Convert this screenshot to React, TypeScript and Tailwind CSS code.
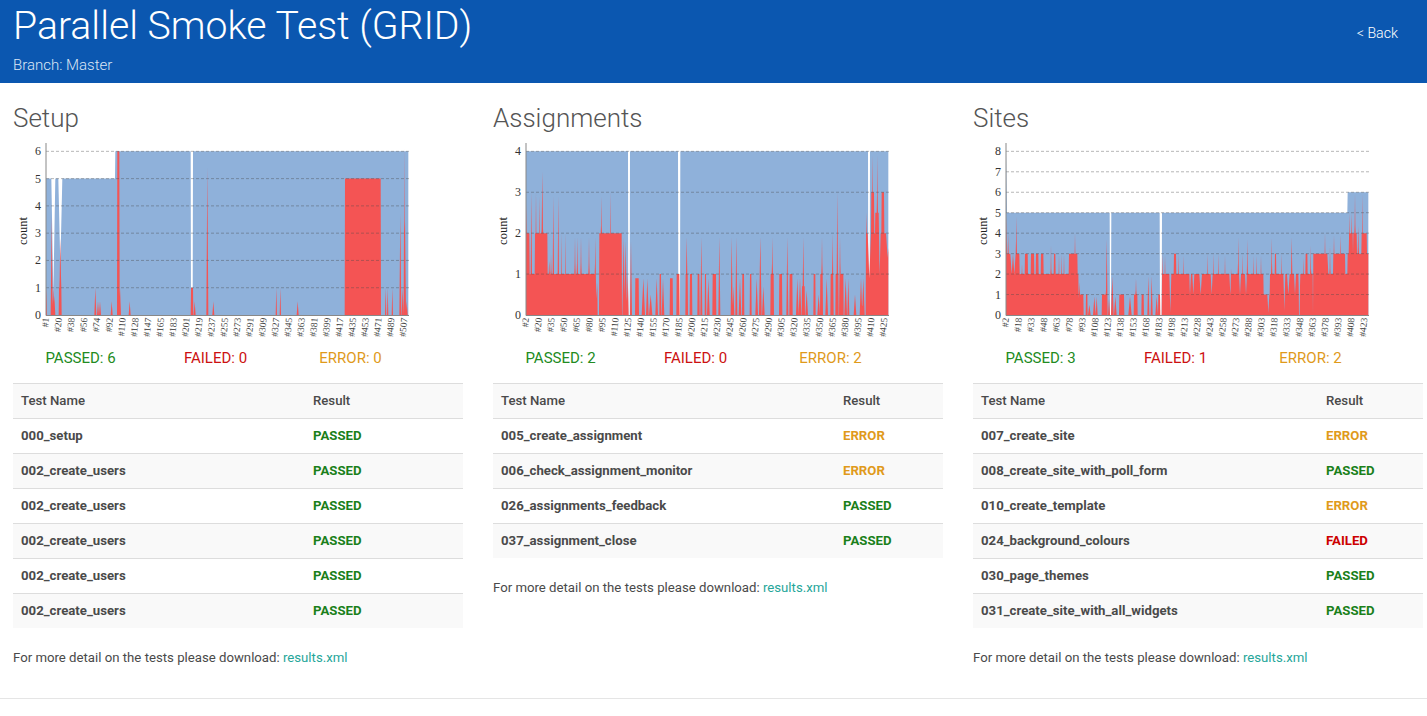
import React from "react";

type Spec = {
  max: number;
  blue: number[][];
  gaps: number[][];
  blueDips?: number[][];
  bluePeaks?: number[][];
  flats: number[][];
  peaks: number[][];
  dips: number[][];
  redGaps?: number[][];
  labels: string[];
};

const X0 = 138;
const X1 = 1225;
const Y0 = 555;
const Y1 = 64;

function profile(x: number, flats: number[][], peaks: number[][], dips: number[][], gaps: number[][]) {
  let v = 0;
  for (const [a, b, h] of flats) if (x >= a && x <= b) v = Math.max(v, h);
  for (const [c, h, w] of peaks) {
    const d = Math.abs(x - c);
    if (d < w) v = Math.max(v, h * (1 - d / w));
  }
  for (const [c, h, w] of dips) {
    const d = Math.abs(x - c);
    if (d < w) v = Math.min(v, h + (v - h) * (d / w));
  }
  for (const [a, b] of gaps) if (x >= a && x <= b) v = 0;
  return v;
}

function polygon(spec: Spec, flats: number[][], peaks: number[][], dips: number[][], gaps: number[][]) {
  const pts: string[] = [`${X0 / 3},${Y0 / 3}`];
  for (let x = X0; x <= X1; x++) {
    const v = profile(x, flats, peaks, dips, gaps);
    const y = Y0 - (v / spec.max) * (Y0 - Y1);
    pts.push(`${(x / 3).toFixed(2)},${(y / 3).toFixed(2)}`);
  }
  pts.push(`${X1 / 3},${Y0 / 3}`);
  return pts.join(" ");
}

function Chart({ spec }: { spec: Spec }) {
  const ticks = Array.from({ length: spec.max + 1 }, (_, i) => i);
  const yFor = (t: number) => (Y0 - (t / spec.max) * (Y0 - Y1)) / 3;
  return (
    <svg width="450" height="215" viewBox="13 0 450 215" className="block">
      <polygon points={polygon(spec, spec.blue, spec.bluePeaks ?? [], spec.blueDips ?? [], spec.gaps)} fill="#8fb1da" />
      <polygon points={polygon(spec, spec.flats, spec.peaks, spec.dips, spec.redGaps ?? [])} fill="#f45454" />
      {ticks.slice(1).map((t) => (
        <line key={t} x1="46" x2="409" y1={yFor(t)} y2={yFor(t)} stroke="#4a4a4a" strokeOpacity="0.4" strokeWidth="1" strokeDasharray="3 2" />
      ))}
      <line x1="46" x2="46" y1="13" y2="185.5" stroke="#888888" strokeWidth="1" />
      <line x1="46" x2="409" y1="185.5" y2="185.5" stroke="#888888" strokeWidth="1" />
      {ticks.map((t) => (
        <text key={t} x="41" y={yFor(t) + 4} textAnchor="end" fontSize="12" fill="#333" fontFamily="'Liberation Serif', serif">
          {t}
        </text>
      ))}
      <text transform="translate(27,101) rotate(-90)" textAnchor="middle" fontSize="12.5" fill="#222" fontFamily="'Liberation Serif', serif">
        count
      </text>
      {spec.labels.map((l, i) => {
        const x = (X0 + (i * (1213 - X0)) / 28) / 3 + 3;
        return (
          <text key={l} transform={`translate(${x},188) rotate(-85)`} textAnchor="end" fontSize="9.5" fill="#444" fontFamily="'Liberation Serif', serif">
            {l}
          </text>
        );
      })}
    </svg>
  );
}

const setup: Spec = {
  max: 6,
  blue: [[138, 346, 5], [346, 1225, 6]],
  gaps: [[573, 578]],
  blueDips: [[160, 0.8, 6], [181, 1.8, 6]],
  flats: [[1035, 1142, 5], [352, 358, 6], [177, 184, 1], [573, 579, 1]],
  peaks: [[139, 1, 2], [155, 3.6, 3], [160, 1, 3], [163, 0.7, 3], [181, 2.8, 4], [286, 1, 3], [294, 0.5, 3], [300, 0.5, 3], [335, 0.5, 3], [360, 1, 3], [389, 0.5, 3], [584, 0.5, 3], [622, 5.4, 3], [640, 0.5, 3], [829, 1, 2], [841, 1, 2], [893, 0.5, 3], [1157, 1, 2], [1163, 1, 2], [1177, 1, 2], [1201, 3.7, 3], [1208, 1, 3], [1213, 6.1, 2], [1215, 3.5, 3], [1220, 0.5, 3]],
  dips: [],
  labels: ["#1", "#20", "#38", "#56", "#74", "#92", "#110", "#128", "#147", "#165", "#183", "#201", "#219", "#237", "#255", "#273", "#291", "#309", "#327", "#345", "#363", "#381", "#399", "#417", "#435", "#453", "#471", "#489", "#507"],
};

const assignments: Spec = {
  max: 4,
  blue: [[138, 1225, 4]],
  gaps: [[445, 449], [595, 600], [1165, 1169]],
  flats: [[138, 352, 1], [138, 148, 2], [165, 202, 2], [358, 425, 2], [466, 476, 0.9], [539, 543, 1], [570, 578, 0.9], [590, 598, 1], [617, 623, 1], [630, 636, 1], [653, 658, 1], [675, 678, 1], [698, 708, 1], [787, 792, 1], [810, 814, 1], [872, 881, 1], [898, 906, 1], [929, 937, 1], [966, 974, 0.7], [1001, 1006, 1], [1021, 1028, 1], [1052, 1058, 1], [1067, 1075, 1], [1080, 1090, 1], [1158, 1225, 2], [1174, 1182, 3], [1186, 1197, 2.5], [1205, 1212, 3]],
  peaks: [[140, 2.7, 4], [154, 3, 3], [168, 3, 3], [178, 2.9, 3], [187, 3.5, 5], [208, 1.8, 4], [213, 1.8, 3], [220, 2.9, 3], [235, 2.9, 3], [244, 2, 2], [256, 2, 2], [285, 1.9, 3], [292, 1.9, 3], [303, 1.9, 3], [327, 1.9, 3], [346, 1.9, 3], [364, 2.9, 4], [391, 3, 3], [431, 1.9, 4], [437, 1.8, 4], [443, 1, 3], [453, 1.8, 3], [490, 0.9, 5], [502, 0.9, 4], [512, 0.5, 5], [530, 0.9, 4], [549, 0.9, 4], [620, 1.9, 4], [664, 1.9, 3], [685, 0.9, 4], [718, 1.9, 3], [755, 1.9, 3], [760, 0.7, 3], [769, 1.9, 3], [780, 0.9, 4], [830, 0.9, 4], [841, 1.9, 4], [850, 0.7, 4], [877, 1.9, 3], [922, 1.9, 3], [952, 0.9, 4], [960, 0.9, 4], [970, 1.9, 3], [980, 0.6, 4], [1016, 0.5, 4], [1026, 1.9, 3], [1040, 0.9, 4], [1058, 2, 3], [1072, 3, 3], [1080, 1.9, 3], [1097, 0.9, 4], [1105, 0.9, 3], [1125, 0.5, 4], [1143, 0.9, 4], [1150, 0.9, 4], [1160, 2.5, 3], [1178, 3.9, 4], [1192, 3.9, 4]],
  dips: [[1168, 0.9, 5], [1199, 1, 3], [1223, 1.4, 5], [210, 1, 5], [350, 0.4, 3]],
  redGaps: [[353, 357]],
  labels: ["#2", "#20", "#35", "#50", "#65", "#80", "#95", "#110", "#125", "#140", "#155", "#170", "#185", "#200", "#215", "#230", "#245", "#260", "#275", "#290", "#305", "#320", "#335", "#350", "#365", "#380", "#395", "#410", "#425"],
};

const sites: Spec = {
  max: 8,
  blue: [[138, 1163, 5], [1163, 1225, 6]],
  bluePeaks: [[139, 8, 4]],
  gaps: [[450, 453], [600, 605]],
  flats: [[138, 355, 2], [138, 178, 3], [195, 203, 3], [213, 222, 3], [228, 235, 3], [243, 250, 3], [282, 286, 3], [327, 352, 3], [360, 370, 1], [378, 382, 1], [426, 437, 1], [478, 492, 1], [522, 532, 1], [545, 551, 1], [595, 600, 1], [606, 910, 2], [642, 648, 3], [910, 930, 1], [930, 1016, 2], [945, 948, 3], [1020, 1058, 2], [1037, 1042, 3], [1060, 1105, 3], [1105, 1120, 2], [1120, 1155, 3], [1155, 1162, 2], [1163, 1225, 3], [1168, 1178, 4], [1180, 1190, 4], [1205, 1220, 4]],
  peaks: [[140, 4.8, 4], [145, 4, 4], [169, 4.8, 4], [186, 2.5, 5], [273, 3.4, 3], [297, 3, 3], [304, 3, 3], [312, 3, 3], [345, 4, 4], [358, 1.6, 4], [388, 0.5, 4], [403, 0.9, 4], [410, 0.9, 3], [440, 3.7, 3], [447, 0.8, 3], [457, 1.9, 4], [466, 0.9, 4], [510, 0.9, 5], [528, 1.8, 3], [565, 1.9, 3], [575, 1.9, 3], [590, 0.9, 4], [608, 3, 3], [615, 2.9, 3], [655, 3, 3], [670, 2.9, 3], [688, 2.5, 4], [742, 3, 2], [760, 3, 3], [775, 3, 2], [795, 2.9, 3], [813, 2.9, 3], [835, 3.8, 3], [847, 3, 3], [862, 3.7, 3], [880, 2.9, 3], [890, 2.9, 3], [903, 2.9, 3], [935, 3.8, 3], [965, 3, 3], [995, 3.8, 4], [1030, 2.8, 3], [1052, 3.4, 3], [1095, 4, 3], [1110, 3.4, 3], [1122, 3.9, 3], [1142, 3.9, 3], [1168, 5, 4], [1175, 5, 4], [1185, 5.9, 4], [1195, 4.8, 4], [1208, 5.9, 3]],
  dips: [[155, 2, 4], [163, 2, 4], [631, 0.1, 3], [690, 1, 3], [700, 1, 3], [722, 1, 4], [755, 1, 3], [811, 1, 3], [840, 1, 3], [858, 1, 3], [925, 0.1, 3], [973, 0.2, 3], [1018, 0.2, 3], [985, 1, 4], [1005, 1, 3], [1105, 2, 3], [1198, 3, 4]],
  labels: ["#2", "#18", "#33", "#48", "#63", "#78", "#93", "#108", "#123", "#138", "#153", "#168", "#183", "#198", "#213", "#228", "#243", "#258", "#273", "#288", "#303", "#318", "#333", "#348", "#363", "#378", "#393", "#408", "#423"],
};

type Row = [string, "PASSED" | "ERROR" | "FAILED"];

const columns: { title: string; spec: Spec; counts: [number, number, number]; grid: string; rows: Row[] }[] = [
  {
    title: "Setup",
    spec: setup,
    counts: [6, 0, 0],
    grid: "grid-cols-[292px_1fr]",
    rows: [
      ["000_setup", "PASSED"],
      ["002_create_users", "PASSED"],
      ["002_create_users", "PASSED"],
      ["002_create_users", "PASSED"],
      ["002_create_users", "PASSED"],
      ["002_create_users", "PASSED"],
    ],
  },
  {
    title: "Assignments",
    spec: assignments,
    counts: [2, 0, 2],
    grid: "grid-cols-[342px_1fr]",
    rows: [
      ["005_create_assignment", "ERROR"],
      ["006_check_assignment_monitor", "ERROR"],
      ["026_assignments_feedback", "PASSED"],
      ["037_assignment_close", "PASSED"],
    ],
  },
  {
    title: "Sites",
    spec: sites,
    counts: [3, 1, 2],
    grid: "grid-cols-[345px_1fr]",
    rows: [
      ["007_create_site", "ERROR"],
      ["008_create_site_with_poll_form", "PASSED"],
      ["010_create_template", "ERROR"],
      ["024_background_colours", "FAILED"],
      ["030_page_themes", "PASSED"],
      ["031_create_site_with_all_widgets", "PASSED"],
    ],
  },
];

const resultClass: Record<Row[1], string> = {
  PASSED: "text-[#1a801a]",
  ERROR: "text-[#e09a1a]",
  FAILED: "text-[#cc0000]",
};

export default function App() {
  return (
    <div className="min-h-[716px] bg-white text-[#4a4a4a] font-['Roboto',sans-serif]">
      <header className="h-[83px] bg-[#0b57b0] pl-[13px] pr-[29px] flex justify-between text-white overflow-hidden">
        <div>
          <h1 className="text-[39.2px] leading-[52px] font-light">Parallel Smoke Test (GRID)</h1>
          <p className="mt-[3px] text-[15px] leading-[20px] font-light text-[#dbe6f5]">Branch: Master</p>
        </div>
        <a className="mt-[23px] text-[14.2px] leading-[20px] font-light">&lt; Back</a>
      </header>
      <main className="flex gap-[30px] pl-[13px] h-[615px]">
        {columns.map((c) => (
          <section key={c.title} className="w-[450px]">
            <h2 className="h-[47px] pt-[19px] text-[26px] leading-[32px] font-light text-[#555555]">{c.title}</h2>
            <Chart spec={c.spec} />
            <div className="h-[38px] w-[405px] grid grid-cols-3 text-center text-[15px] leading-[27px]">
              <span className="text-[#228b22]">PASSED: {c.counts[0]}</span>
              <span className="text-[#cc1111]">FAILED: {c.counts[1]}</span>
              <span className="text-[#e09a1a]">ERROR: {c.counts[2]}</span>
            </div>
            <div className="text-[13.2px] font-medium">
              <div className={`grid ${c.grid} items-center h-[35px] px-2 bg-[#f9f9f9] border-t border-[#dddddd]`}>
                <span>Test Name</span>
                <span>Result</span>
              </div>
              {c.rows.map((r, i) => (
                <div key={i} className={`grid ${c.grid} items-center h-[35px] px-2 border-t border-[#dddddd] font-bold ${i % 2 === 1 ? "bg-[#f9f9f9]" : "bg-white"}`}>
                  <span>{r[0]}</span>
                  <span className={resultClass[r[1]]}>{r[1]}</span>
                </div>
              ))}
            </div>
            <p className="mt-[20px] text-[13.2px] leading-[19px]">
              For more detail on the tests please download: <a className="text-[#26a69a]">results.xml</a>
            </p>
          </section>
        ))}
      </main>
      <hr className="border-t border-[#e5e5e5]" />
    </div>
  );
}
